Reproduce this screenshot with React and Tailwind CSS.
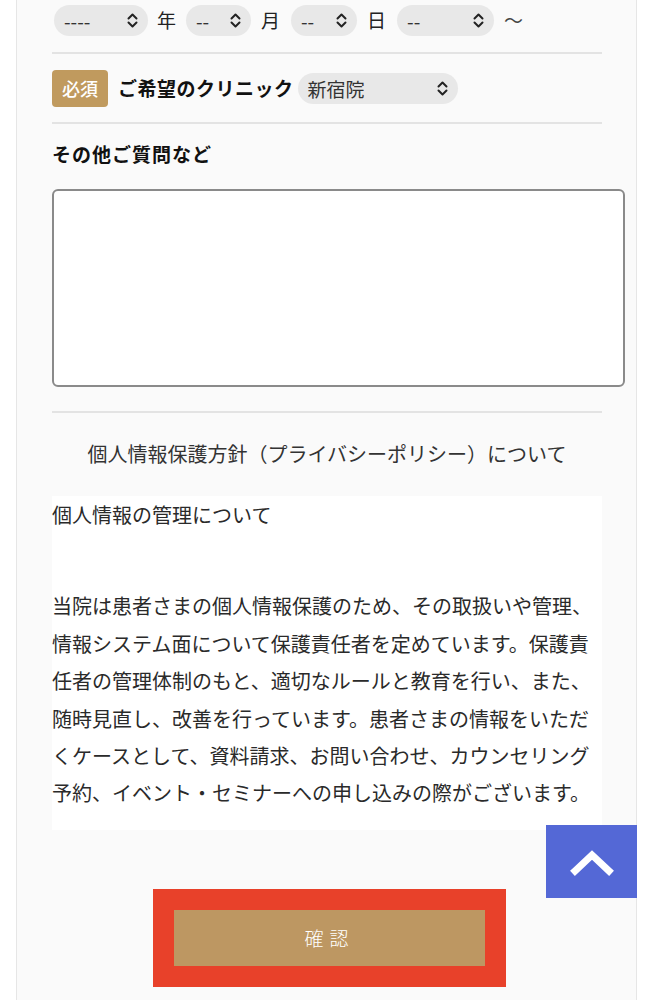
import React from "react";

const font = { fontFamily: '"Noto Sans CJK JP", "Noto Sans", sans-serif' };

// up/down chevron like iOS select
const UpDown = () => (
  <svg width="11" height="15" viewBox="0 0 11 15" fill="none" stroke="#222" strokeWidth="2" strokeLinecap="round" strokeLinejoin="round">
    <polyline points="1.5 5.5 5.5 1.5 9.5 5.5" />
    <polyline points="1.5 9.5 5.5 13.5 9.5 9.5" />
  </svg>
);

const Pill = ({ value, w }) => (
  <div className={`flex h-[31px] items-center justify-between rounded-full bg-[#e8e8e8] pl-[10px] pr-[10px] text-[19px] text-[#333] ${w}`}>
    <span className="leading-none">{value}</span>
    <UpDown />
  </div>
);

const Divider = () => <div className="h-[2px] w-[550px] bg-[#e3e3e3]" />;

export default function App() {
  return (
    <div className="min-h-[1000px] bg-white" style={font}>
      <div className="relative ml-[16px] w-[621px] border-x border-[#e6e6e6] bg-[#fafafa] pb-[13px] pl-[35px] text-[#222]">
        {/* date row */}
        <div className="flex h-[40px] items-center text-[19px]">
          <div className="ml-[2px]"><Pill value="----" w="w-[94px]" /></div>
          <span className="ml-[9px]">年</span>
          <div className="ml-[10px]"><Pill value="--" w="w-[65px]" /></div>
          <span className="ml-[10px]">月</span>
          <div className="ml-[11px]"><Pill value="--" w="w-[66px]" /></div>
          <span className="ml-[10px]">日</span>
          <div className="ml-[11px]"><Pill value="--" w="w-[97px]" /></div>
          <span className="ml-[10px] text-[#444]">〜</span>
        </div>
        <div className="mt-[12px]"><Divider /></div>

        {/* clinic row */}
        <div className="flex h-[68px] items-center">
          <div className="flex h-[37px] w-[56px] items-center justify-center rounded-[4px] bg-[#c09a5e] text-[18px] font-medium text-white">必須</div>
          <span className="ml-[10px] text-[19px] font-bold tracking-[0.5px] text-[#111]">ご希望のクリニック</span>
          <div className="ml-[4px]"><Pill value="新宿院" w="w-[160px]" /></div>
        </div>
        <Divider />

        {/* question */}
        <div className="mt-[17px] text-[19px] font-bold leading-[26px] tracking-[1px] text-[#111]">その他ご質問など</div>
        <textarea className="mt-[22px] block h-[198px] w-[573px] resize-none rounded-[6px] border-2 border-[#8a8a8a] bg-white" />
        <div className="mt-[24px]"><Divider /></div>

        {/* privacy */}
        <div className="mt-[27px] w-[550px] text-center text-[20px] leading-[28px] text-[#333]">
          個人情報保護方針（プライバシーポリシー）について
        </div>
        <div className="mt-[28px] w-[550px] bg-white pb-[18px] text-[20px] leading-[37.4px] text-[#2a2a2a]">
          <p>個人情報の管理について</p>
          <p className="mt-[54px] w-[545px]">
            当院は患者さまの個人情報保護のため、その取扱いや管理、情報システム面について保護責任者を定めています。保護責任者の管理体制のもと、適切なルールと教育を行い、また、随時見直し、改善を行っています。患者さまの情報をいただくケースとして、資料請求、お問い合わせ、カウンセリング予約、イベント・セミナーへの申し込みの際がございます。
          </p>
        </div>

        {/* submit */}
        <div className="mt-[59px] ml-[101px] w-[353px] bg-[#e8412a] p-[21px]">
          <button className="flex h-[56px] w-full items-center justify-center bg-[#bd9762] text-[19px] font-light tracking-[6px] text-white">
            確認
          </button>
        </div>

        {/* back to top */}
        <div className="absolute right-[-1px] top-[825px] flex h-[73px] w-[91px] items-center justify-center bg-[#5468d6]">
          <svg width="44" height="28" viewBox="0 0 44 28" fill="none" stroke="white" strokeWidth="7" strokeLinecap="square" strokeLinejoin="miter">
            <polyline points="5 23 22 7 39 23" />
          </svg>
        </div>
      </div>
    </div>
  );
}
